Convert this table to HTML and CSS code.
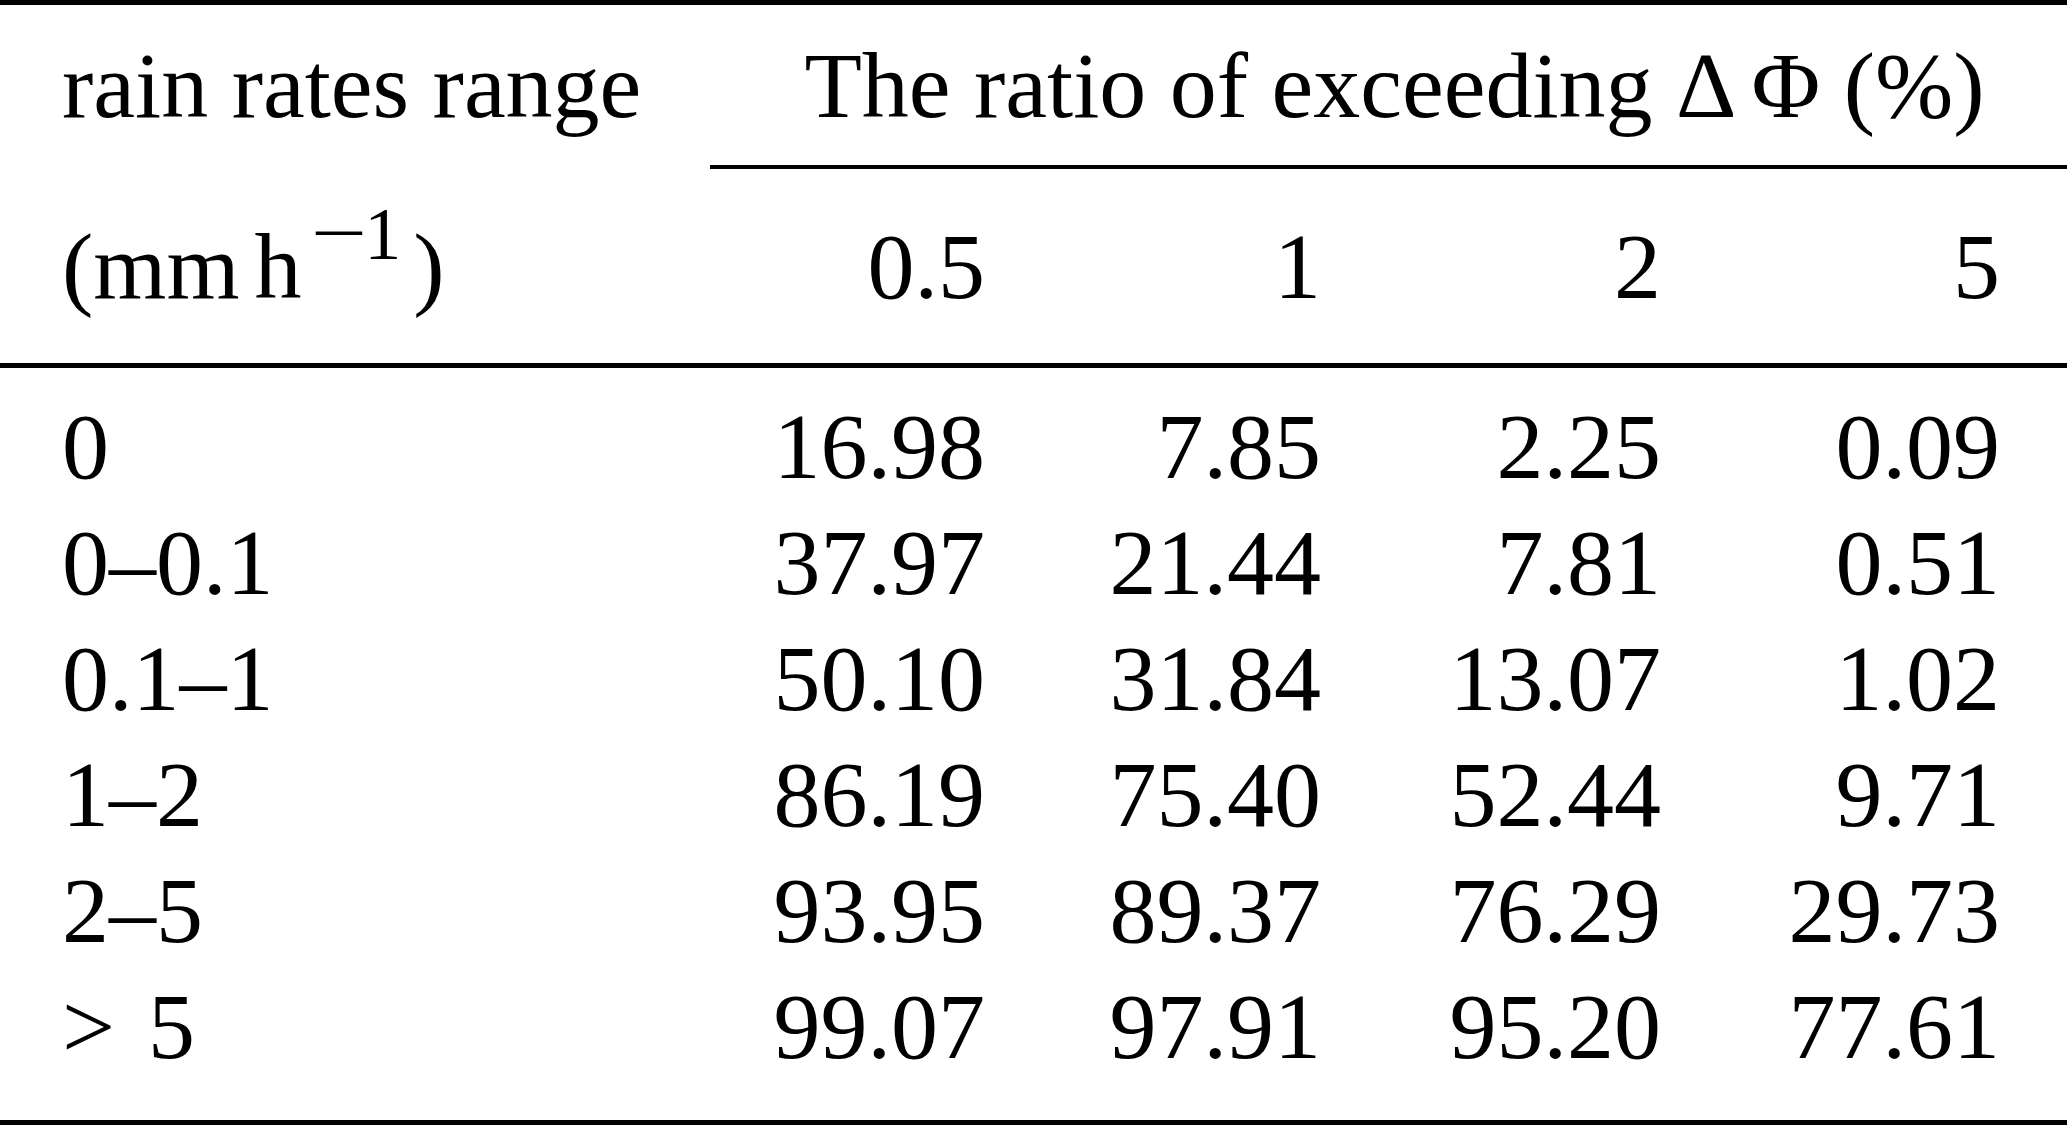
FILE: index.html
```html
<!DOCTYPE html>
<html lang="en">
<head>
<meta charset="utf-8">
<title>Ratio of exceeding ΔΦ by rain rate range</title>
<link rel="stylesheet" href="styles.css">
</head>
<body>
<table class="tbl">
  <colgroup>
    <col class="c0">
    <col class="c1">
    <col class="c2">
    <col class="c3">
    <col class="c4">
  </colgroup>
  <thead>
    <tr class="hrow1">
      <th class="lab">rain rates range</th>
      <th class="span" colspan="4"><div class="cmid">The ratio of exceeding Δ<span class="ts"></span>Φ (%)</div></th>
    </tr>
    <tr class="hrow2">
      <th class="lab">(mm<span class="ts"></span>h<sup class="sup"><span class="minus">−</span>1</sup>)</th>
      <th class="num">0.5</th>
      <th class="num">1</th>
      <th class="num">2</th>
      <th class="num last">5</th>
    </tr>
  </thead>
  <tbody>
    <tr class="first">
      <td class="lab">0</td><td class="num">16.98</td><td class="num">7.85</td><td class="num">2.25</td><td class="num last">0.09</td>
    </tr>
    <tr>
      <td class="lab">0–0.1</td><td class="num">37.97</td><td class="num">21.44</td><td class="num">7.81</td><td class="num last">0.51</td>
    </tr>
    <tr>
      <td class="lab">0.1–1</td><td class="num">50.10</td><td class="num">31.84</td><td class="num">13.07</td><td class="num last">1.02</td>
    </tr>
    <tr>
      <td class="lab">1–2</td><td class="num">86.19</td><td class="num">75.40</td><td class="num">52.44</td><td class="num last">9.71</td>
    </tr>
    <tr>
      <td class="lab">2–5</td><td class="num">93.95</td><td class="num">89.37</td><td class="num">76.29</td><td class="num last">29.73</td>
    </tr>
    <tr class="lastrow">
      <td class="lab"><span class="rel">&gt;</span>5</td><td class="num">99.07</td><td class="num">97.91</td><td class="num">95.20</td><td class="num last">77.61</td>
    </tr>
  </tbody>
</table>
</body>
</html>
```

FILE: styles.css
```css
html, body {
  margin: 0;
  padding: 0;
  background: #ffffff;
}

.tbl {
  width: 2067px;
  table-layout: fixed;
  border-collapse: separate;
  border-spacing: 0;
  border-top: 5px solid #000;
  border-bottom: 5px solid #000;
  font-family: "Liberation Serif", "Times New Roman", serif;
  font-size: 94px;
  color: #000;
}

.c0 { width: 700px; }
.c1 { width: 300px; }
.c2 { width: 336px; }
.c3 { width: 340px; }
.c4 { width: 391px; }

.tbl th,
.tbl td {
  padding: 0;
  font-weight: normal;
  vertical-align: baseline;
  white-space: nowrap;
}

.lab {
  text-align: left;
  padding-left: 62px !important;
}

.num {
  text-align: right;
  padding-right: 15px !important;
}

.num.last {
  padding-right: 67px !important;
}

.hrow1 th {
  line-height: 160px;
}

.cmid {
  margin-left: 10px;
  padding-left: 12px;
  text-align: center;
  border-bottom: 4px solid #000;
}

.ts {
  display: inline-block;
  width: 15px;
}

.hrow2 th {
  line-height: 194px;
  border-bottom: 5px solid #000;
}

.sup {
  font-size: 74px;
  line-height: 0;
  vertical-align: 39px;
  margin-left: 0;
  margin-right: 12px;
}

.minus {
  display: inline-block;
  line-height: 0;
  transform: scaleX(1.35);
  vertical-align: 1px;
  margin-left: 16px;
  margin-right: 5px;
}

.rel {
  margin-right: 33px;
}

.tbl td {
  line-height: 116px;
}

.first td {
  padding-top: 20px;
}

.lastrow td {
  padding-bottom: 36px;
}
```
